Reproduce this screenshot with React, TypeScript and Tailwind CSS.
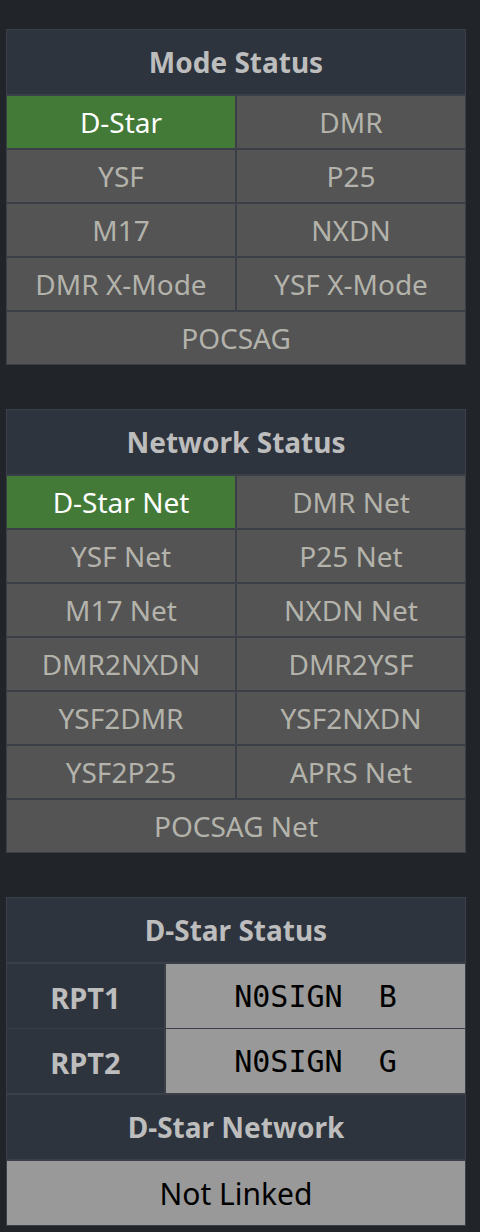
import React from "react";

const modes = [
  { name: "D-Star", on: true },
  { name: "DMR", on: false },
  { name: "YSF", on: false },
  { name: "P25", on: false },
  { name: "M17", on: false },
  { name: "NXDN", on: false },
  { name: "DMR X-Mode", on: false },
  { name: "YSF X-Mode", on: false },
  { name: "POCSAG", on: false, wide: true },
];

const networks = [
  { name: "D-Star Net", on: true },
  { name: "DMR Net", on: false },
  { name: "YSF Net", on: false },
  { name: "P25 Net", on: false },
  { name: "M17 Net", on: false },
  { name: "NXDN Net", on: false },
  { name: "DMR2NXDN", on: false },
  { name: "DMR2YSF", on: false },
  { name: "YSF2DMR", on: false },
  { name: "YSF2NXDN", on: false },
  { name: "YSF2P25", on: false },
  { name: "APRS Net", on: false },
  { name: "POCSAG Net", on: false, wide: true },
];

type Item = { name: string; on: boolean; wide?: boolean };

const StatusPanel = ({ title, items }: { title: string; items: Item[] }) => {
  return (
    <div className="ml-[6px] w-[460px] bg-[#3b4048] p-px grid grid-cols-2 gap-[2px]">
      <div className="col-span-2 h-[64px] bg-[#2e343d] flex items-center justify-center text-[28px] font-bold text-[#bdbdbd]">
        {title}
      </div>
      {items.map((item, index) => (
        <div
          key={index}
          className={
            "h-[52px] flex items-center justify-center text-[28px] " +
            (item.on ? "bg-[#437a38] text-white " : "bg-[#545454] text-[#b3b3ab] ") +
            (item.wide ? "col-span-2" : "")
          }
        >
          {item.name}
        </div>
      ))}
    </div>
  );
};

const App = () => {
  return (
    <div
      className="min-h-[1232px] w-[480px] bg-[#212428] pt-[29px]"
      style={{ fontFamily: '"Noto Sans", "Open Sans", sans-serif' }}
    >
      <StatusPanel title="Mode Status" items={modes} />
      <div className="h-[44px]" />
      <StatusPanel title="Network Status" items={networks} />
      <div className="h-[44px]" />
      <div className="ml-[6px] w-[460px] bg-[#3b4048] p-px flex flex-col gap-[2px]">
        <div className="h-[64px] bg-[#2e343d] flex items-center justify-center text-[28px] font-bold text-[#bdbdbd]">
          D-Star Status
        </div>
        <div className="grid grid-cols-[157px_1fr] gap-x-[2px] gap-y-px">
          <div className="h-[64px] bg-[#2e343d] flex items-center justify-center pt-[4px] text-[29px] font-bold text-[#bdbdbd]">
            RPT1
          </div>
          <div className="h-[64px] bg-[#999999] flex items-center justify-center text-[30px] text-black whitespace-pre font-['DejaVu_Sans_Mono',monospace]">
            N0SIGN  B
          </div>
          <div className="h-[64px] bg-[#2e343d] flex items-center justify-center pt-[4px] text-[29px] font-bold text-[#bdbdbd]">
            RPT2
          </div>
          <div className="h-[64px] bg-[#999999] flex items-center justify-center text-[30px] text-black whitespace-pre font-['DejaVu_Sans_Mono',monospace]">
            N0SIGN  G
          </div>
        </div>
        <div className="h-[64px] bg-[#2e343d] flex items-center justify-center text-[28px] font-bold text-[#bdbdbd]">
          D-Star Network
        </div>
        <div className="h-[64px] bg-[#999999] flex items-center justify-center text-[30px] text-black">
          Not Linked
        </div>
      </div>
    </div>
  );
};

export default App;
